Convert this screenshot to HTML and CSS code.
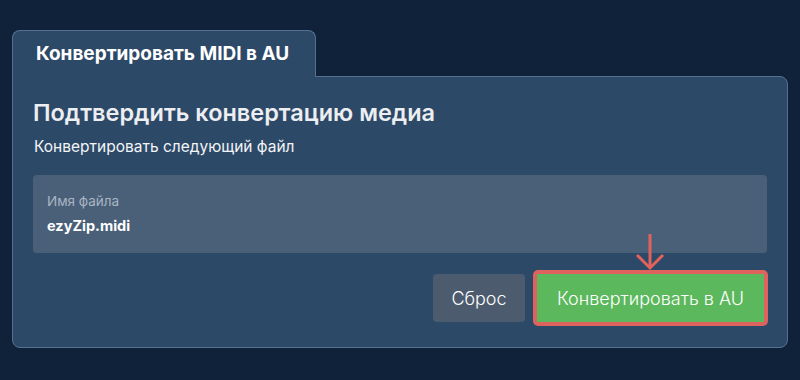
FILE: index.html
```html
<!DOCTYPE html>
<html lang="ru">
<head>
<meta charset="utf-8">
<link rel="stylesheet" href="styles.css">
</head>
<body>
<div class="wrap">
  <div class="tab">Конвертировать MIDI в AU</div>
  <div class="panel">
    <h1 class="title">Подтвердить конвертацию медиа</h1>
    <p class="sub">Конвертировать следующий файл</p>
    <div class="field">
      <div class="label">Имя файла</div>
      <div class="value">ezyZip.midi</div>
    </div>
    <div class="actions">
      <button class="btn reset">Сброс</button>
      <div class="hl">
        <button class="btn go">Конвертировать в AU</button>
        <svg class="arrow" width="30" height="40" viewBox="0 0 30 40">
          <path d="M15 2 V36 M2 23 L15 36 L28 23" fill="none" stroke="#e0625d" stroke-width="3"/>
        </svg>
      </div>
    </div>
  </div>
</div>
</body>
</html>
```
FILE: styles.css
```css
* { box-sizing: border-box; }
html, body { margin: 0; }
body {
  background: #10223a;
  font-family: Inter, "Noto Sans", sans-serif;
  width: 800px;
  height: 380px;
  overflow: hidden;
}
.wrap {
  padding: 30px 12px 0 12px;
}
.tab {
  position: relative;
  z-index: 1;
  display: inline-flex;
  align-items: center;
  width: 304px;
  height: 47px;
  margin-bottom: -1px;
  padding: 0 0 2px 23px;
  background: #2d4968;
  border: 1px solid #56718f;
  border-bottom: none;
  border-radius: 8px 8px 0 0;
  color: #fff;
  font-weight: 700;
  font-size: 19px;
  letter-spacing: 0;
}
.panel {
  width: 776px;
  height: 272px;
  background: #2d4968;
  border: 1px solid #56718f;
  border-radius: 0 8px 8px 8px;
  padding: 20px 20px 0 20px;
}
.title {
  margin: 0;
  font-size: 23.5px;
  font-weight: 600;
  color: #eceef1;
  line-height: 32px;
}
.sub {
  margin: 8px 0 0 1px;
  font-size: 15.5px;
  color: #f2f4f6;
  line-height: 20px;
}
.field {
  margin-top: 18px;
  height: 78px;
  background: #4a6079;
  border-radius: 4px;
  padding: 17px 14px 0 14px;
}
.label {
  font-size: 13.5px;
  color: #a9b4c1;
  line-height: 18px;
}
.value {
  margin-top: 6px;
  font-size: 14.5px;
  font-weight: 700;
  color: #fff;
  line-height: 20px;
}
.actions {
  display: flex;
  justify-content: flex-end;
  align-items: center;
  gap: 8px;
  margin-top: 17px;
}
.btn {
  font-family: inherit;
  border: none;
  border-radius: 4px;
  height: 48px;
  font-size: 18px;
  color: #fff;
  font-weight: 300;
  padding: 0;
}
.reset {
  width: 92px;
  background: #4c5b6d;
}
.hl {
  position: relative;
  border: 4px solid #de625d;
  border-radius: 5px;
  margin-right: -1px;
}
.go {
  display: block;
  width: 227px;
  border-radius: 0;
  background: #5cb85c;
}
.arrow {
  position: absolute;
  left: 98px;
  top: -42px;
}
```
